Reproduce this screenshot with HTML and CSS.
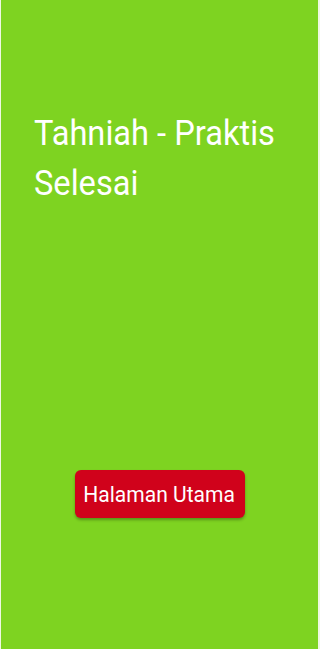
FILE: index.html
```html
<!DOCTYPE html>
<html lang="ms">
<head>
<meta charset="utf-8">
<title>Tahniah</title>
<link rel="stylesheet" href="styles.css">
</head>
<body>
<main class="screen">
  <h1 class="title">Tahniah - Praktis Selesai</h1>
  <div class="actions">
    <button class="home-btn" type="button"><span class="home-label">Halaman Utama</span></button>
  </div>
</main>
</body>
</html>
```
FILE: styles.css
```css
html, body {
  margin: 0;
  padding: 0;
  height: 100%;
}
body {
  background: #eef8e2;
  font-family: Roboto, "Liberation Sans", sans-serif;
  padding: 0 2px 0 1px;
  box-sizing: border-box;
}
.screen {
  background: #7ed321;
  height: 649px;
  display: flex;
  flex-direction: column;
  padding: 109px 0 0 33px;
  box-sizing: border-box;
}
.title {
  margin: 0;
  font-weight: 400;
  font-size: 35px;
  line-height: 50px;
  color: #ffffff;
  width: 268px;
  transform: scaleX(0.932);
  transform-origin: left top;
}
.actions {
  margin-top: 261px;
  margin-left: -33px;
  display: flex;
  justify-content: center;
}
.home-btn {
  width: 170px;
  height: 48px;
  background: #d0021b;
  border: none;
  border-radius: 6px;
  box-shadow: 0 2px 3px rgba(0, 0, 0, 0.3);
  color: #ffffff;
  font-family: Roboto, "Liberation Sans", sans-serif;
  font-size: 22.5px;
  padding: 0;
  display: flex;
  align-items: center;
  justify-content: center;
  white-space: nowrap;
}
.home-label {
  display: inline-block;
  transform: scaleX(0.935);
}
```
